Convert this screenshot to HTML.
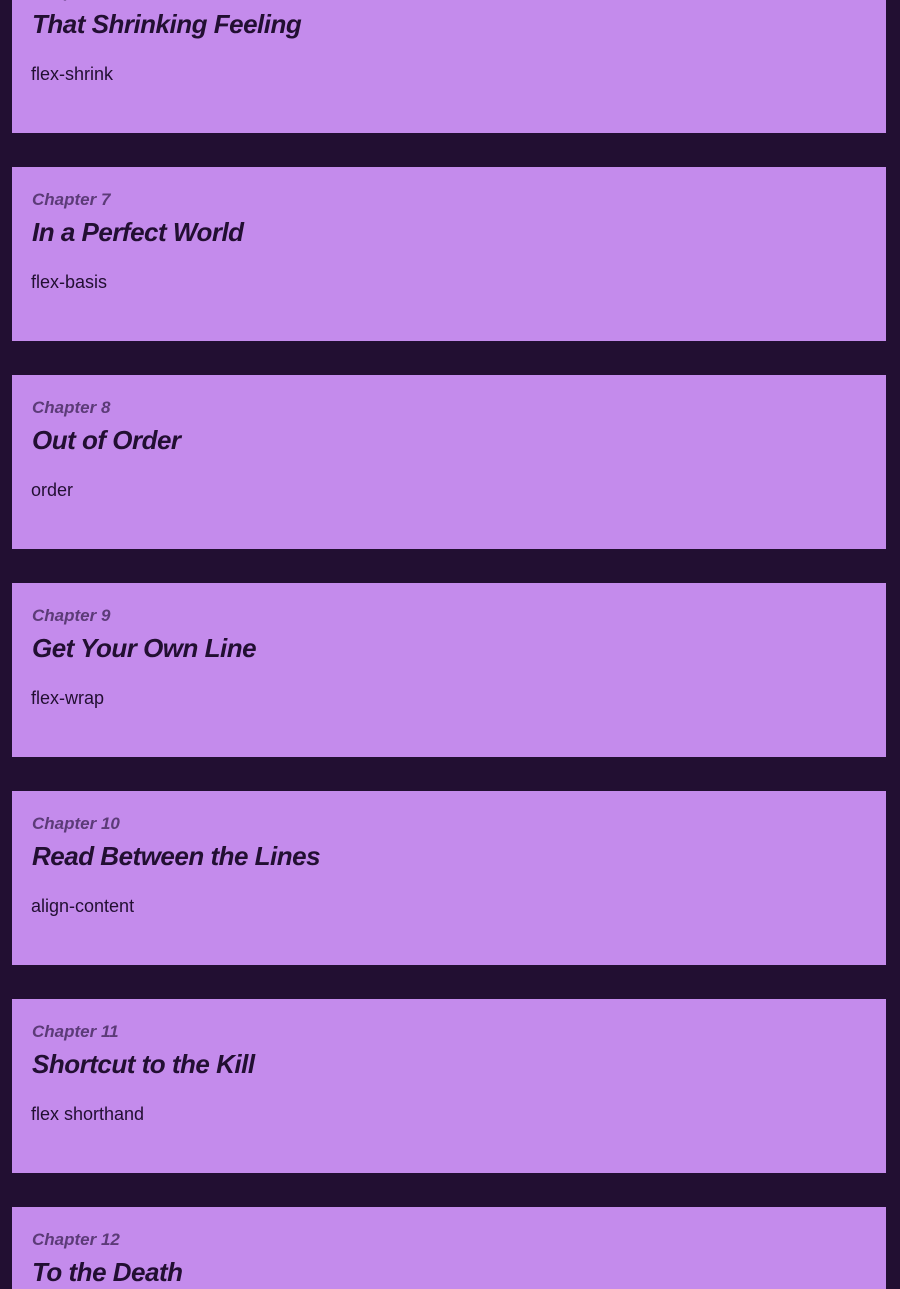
<!DOCTYPE html>
<html style="height:1289px;overflow:hidden"><head><style>
html,body{margin:0;padding:0;}
body{background:#220f32;width:900px;height:1289px;overflow:hidden;position:relative;font-family:"Liberation Sans",sans-serif;}
.card{position:absolute;left:12px;width:874px;height:174px;background:#c48bec;}
.ch{position:absolute;left:20px;top:23px;font-size:17px;font-weight:bold;font-style:italic;color:#5c3b78;}
.t{position:absolute;left:20px;top:50px;font-size:26px;font-weight:bold;font-style:italic;color:#220f32;letter-spacing:-0.5px;}
.d{position:absolute;left:19px;top:105px;font-size:18px;color:#220f32;}
</style></head><body>
<div class="card" style="top:-41px"><div class="ch">Chapter 6</div><div class="t">That Shrinking Feeling</div><div class="d">flex-shrink</div></div>
<div class="card" style="top:167px"><div class="ch">Chapter 7</div><div class="t">In a Perfect World</div><div class="d">flex-basis</div></div>
<div class="card" style="top:375px"><div class="ch">Chapter 8</div><div class="t">Out of Order</div><div class="d">order</div></div>
<div class="card" style="top:583px"><div class="ch">Chapter 9</div><div class="t">Get Your Own Line</div><div class="d">flex-wrap</div></div>
<div class="card" style="top:791px"><div class="ch">Chapter 10</div><div class="t">Read Between the Lines</div><div class="d">align-content</div></div>
<div class="card" style="top:999px"><div class="ch">Chapter 11</div><div class="t">Shortcut to the Kill</div><div class="d">flex shorthand</div></div>
<div class="card" style="top:1207px;height:82px"><div class="ch">Chapter 12</div><div class="t">To the Death</div></div>
</body></html>
